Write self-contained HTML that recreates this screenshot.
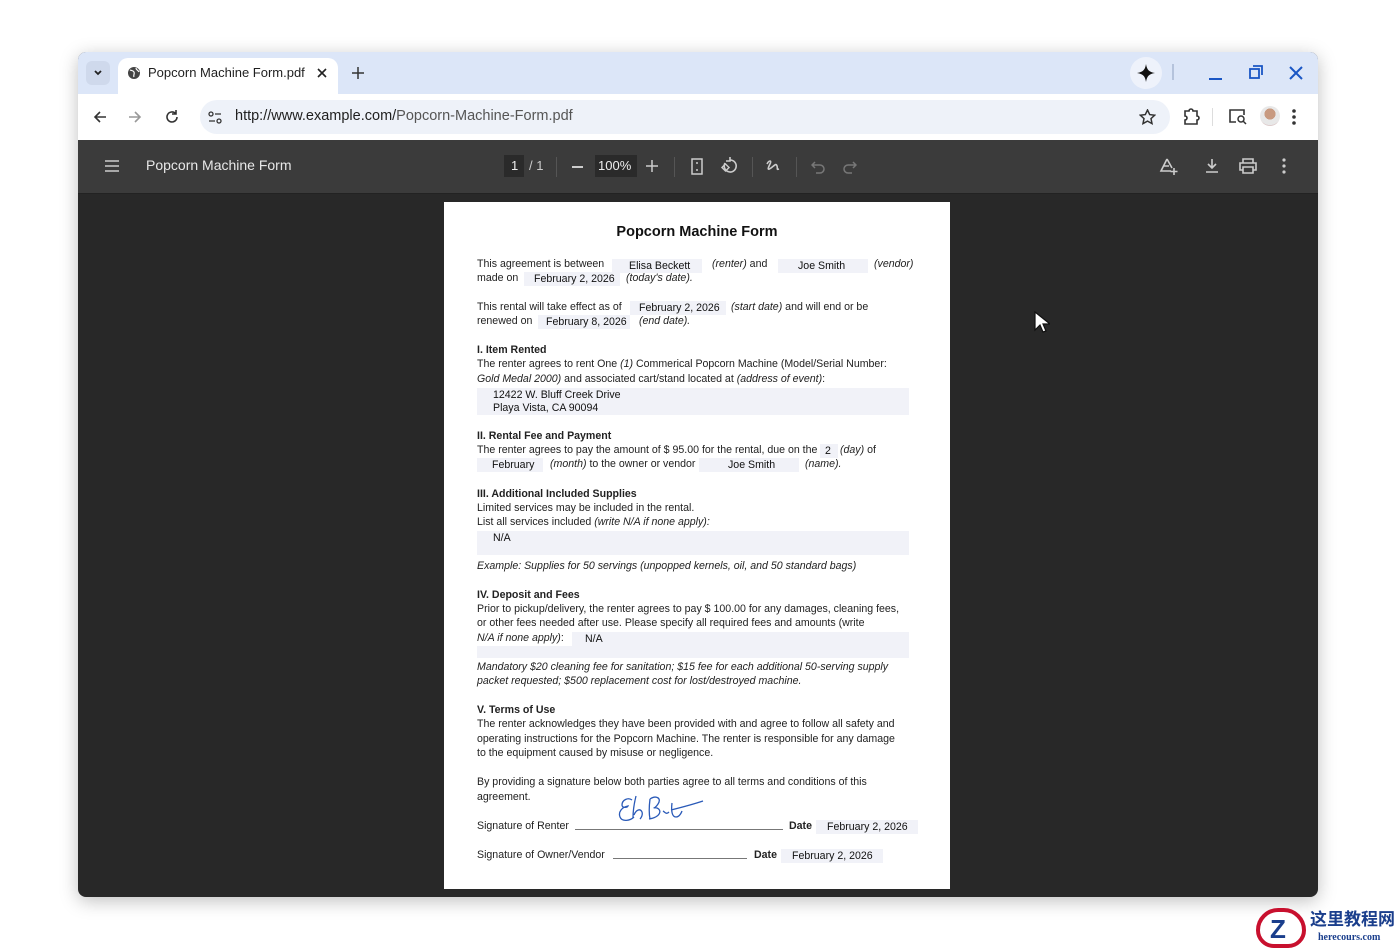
<!DOCTYPE html>
<html><head><meta charset="utf-8"><style>
*{margin:0;padding:0;box-sizing:border-box}
body{width:1400px;height:950px;background:#fff;position:relative;overflow:hidden;font-family:"Liberation Sans",Arial,sans-serif}
.win{position:absolute;left:78px;top:52px;width:1240px;height:845px;box-shadow:0 4px 18px rgba(0,0,0,.25);border-radius:8px;overflow:hidden;background:#282828}
.tabs{position:absolute;left:0;top:0;width:1240px;height:42px;background:#dce6f8}
.tab{position:absolute;left:40px;top:6px;width:220px;height:36px;background:#fff;border-radius:10px 10px 0 0}
.addr{position:absolute;left:0;top:42px;width:1240px;height:46px;background:#fff}
.url{position:absolute;left:122px;top:6px;width:970px;height:34px;border-radius:17px;background:#eef2f9}
.tb{position:absolute;left:0;top:88px;width:1240px;height:54px;background:#3b3b3b;border-bottom:1px solid #222}
.page{position:absolute;left:444px;top:202px;width:506px;height:687px;background:#fff}
.t{position:absolute;font-size:10.6px;line-height:13px;white-space:nowrap;color:#222}
.b{font-weight:bold}
i{font-style:italic}
.f{position:absolute;background:#f1f2f8;font-size:10.6px;line-height:14px;height:14px;color:#111;white-space:nowrap}
.ic{position:absolute}
</style></head><body>
<div class="win">
 <div class="tabs">
  <div style="position:absolute;left:8px;top:9px;width:24px;height:24px;border-radius:6px;background:#cfd9ec"></div>
  <svg class="ic" style="left:14px;top:15px" width="12" height="12"><path d="M3 4l3 3 3-3" stroke="#222" stroke-width="1.8" fill="none"/></svg>
  <div class="tab">
   <svg class="ic" style="left:9px;top:8px" width="14" height="14"><circle cx="7" cy="7" r="6" fill="#444"/><path d="M3 4c2 1 3 0 4 2s-1 3 0 5M9 2c0 2 2 2 3 4" stroke="#fff" stroke-width="1.2" fill="none"/></svg>
   <div class="t" style="left:30px;top:7px;font-size:13px;line-height:16px;color:#1f1f1f">Popcorn Machine Form.pdf</div>
   <svg class="ic" style="left:198px;top:9px" width="12" height="12"><path d="M2 2l8 8M10 2l-8 8" stroke="#222" stroke-width="1.6"/></svg>
  </div>
  <svg class="ic" style="left:273px;top:14px" width="14" height="14"><path d="M7 1v12M1 7h12" stroke="#333" stroke-width="1.5"/></svg>
  <div style="position:absolute;left:1052px;top:5px;width:32px;height:32px;border-radius:16px;background:#eef2fb"></div>
  <svg class="ic" style="left:1059px;top:12px" width="18" height="18"><path d="M9 0C10 6 12 8 18 9 12 10 10 12 9 18 8 12 6 10 0 9 6 8 8 6 9 0z" fill="#111"/></svg>
  <div style="position:absolute;left:1094px;top:12px;width:2px;height:16px;background:#b5c3dc"></div>
  <div style="position:absolute;left:1131px;top:26px;width:13px;height:2px;background:#1a56c4"></div>
  <svg class="ic" style="left:1171px;top:13px" width="14" height="14"><rect x="1" y="4" width="9" height="9" fill="none" stroke="#1a56c4" stroke-width="1.8"/><path d="M4 1h9v9" fill="none" stroke="#1a56c4" stroke-width="1.8"/></svg>
  <svg class="ic" style="left:1211px;top:14px" width="14" height="14"><path d="M1 1l12 12M13 1L1 13" stroke="#1a56c4" stroke-width="2"/></svg>
 </div>
 <div class="addr">
  <svg class="ic" style="left:14px;top:15px" width="16" height="16"><path d="M14 8H3M8 3L3 8l5 5" stroke="#333" stroke-width="1.6" fill="none"/></svg>
  <svg class="ic" style="left:49px;top:15px" width="16" height="16"><path d="M2 8h11M8 3l5 5-5 5" stroke="#999" stroke-width="1.6" fill="none"/></svg>
  <svg class="ic" style="left:86px;top:15px" width="16" height="16"><path d="M13 8a5 5 0 1 1-1.5-3.6M12 1v4H8" stroke="#333" stroke-width="1.6" fill="none"/></svg>
  <div class="url">
   <svg class="ic" style="left:7px;top:10px" width="16" height="16"><circle cx="4" cy="4" r="2" fill="none" stroke="#333" stroke-width="1.3"/><path d="M8 4h6M2 11h6" stroke="#333" stroke-width="1.3"/><circle cx="12" cy="11" r="2" fill="none" stroke="#333" stroke-width="1.3"/></svg>
   <div class="t" style="left:35px;top:7px;font-size:14.5px;line-height:18px;color:#1f1f1f">http://www.example.com/<span style="color:#555">Popcorn-Machine-Form.pdf</span></div>
   <svg class="ic" style="left:939px;top:9px" width="17" height="17"><path d="M8.5 1l2.2 4.6 5 .6-3.7 3.4 1 5-4.5-2.5-4.5 2.5 1-5L1.3 6.2l5-.6z" fill="none" stroke="#333" stroke-width="1.5"/></svg>
  </div>
  <svg class="ic" style="left:1104px;top:14px" width="18" height="18"><path d="M3 3h4a2 2 0 0 1 4 0h4v5a2 2 0 0 1 0 4v4H3v-4a2 2 0 0 0 0-4z" fill="none" stroke="#333" stroke-width="1.6"/></svg>
  <div style="position:absolute;left:1134px;top:14px;width:1px;height:18px;background:#ddd"></div>
  <svg class="ic" style="left:1150px;top:14px" width="19" height="17"><path d="M8 14H2V2h14v5" fill="none" stroke="#333" stroke-width="1.6"/><circle cx="13" cy="11" r="3" fill="none" stroke="#333" stroke-width="1.5"/><path d="M15 13l3 3" stroke="#333" stroke-width="1.5"/></svg>
  <div style="position:absolute;left:1182px;top:12px;width:20px;height:20px;border-radius:10px;background:radial-gradient(circle at 50% 40%,#c89a80 0 35%,#e8e8e8 36% 70%,#dcc 71%)"></div>
  <svg class="ic" style="left:1213px;top:14px" width="6" height="18"><circle cx="3" cy="3" r="1.8" fill="#333"/><circle cx="3" cy="9" r="1.8" fill="#333"/><circle cx="3" cy="15" r="1.8" fill="#333"/></svg>
 </div>
 <div class="tb">
  <svg class="ic" style="left:26px;top:19px" width="16" height="14"><path d="M1 2h14M1 7h14M1 12h14" stroke="#ccc" stroke-width="1.5"/></svg>
  <div class="t" style="left:68px;top:16px;font-size:14px;line-height:18px;color:#e8e8e8">Popcorn Machine Form</div>
  <div style="position:absolute;left:426px;top:15px;width:20px;height:22px;background:#2a2a2a"></div>
  <div class="t" style="left:433px;top:18px;font-size:13px;line-height:16px;color:#eee">1</div>
  <div class="t" style="left:451px;top:18px;font-size:13px;line-height:16px;color:#ccc">/ 1</div>
  <div style="position:absolute;left:478px;top:17px;width:1px;height:20px;background:#555"></div>
  <div style="position:absolute;left:494px;top:26px;width:11px;height:1.5px;background:#ccc"></div>
  <div style="position:absolute;left:517px;top:15px;width:42px;height:22px;background:#2a2a2a"></div>
  <div class="t" style="left:520px;top:18px;font-size:13px;line-height:16px;color:#eee">100%</div>
  <svg class="ic" style="left:568px;top:20px" width="12" height="12"><path d="M6 0v12M0 6h12" stroke="#ccc" stroke-width="1.5"/></svg>
  <div style="position:absolute;left:596px;top:17px;width:1px;height:20px;background:#555"></div>
  <svg class="ic" style="left:613px;top:18px" width="12" height="17"><rect x="1" y="1" width="10" height="15" fill="none" stroke="#ccc" stroke-width="1.5"/><path d="M6 4v2M6 11v2" stroke="#ccc" stroke-width="1.5"/></svg>
  <svg class="ic" style="left:642px;top:17px" width="18" height="18"><path d="M10 3a6 6 0 1 1-5 3M10 0v4H6" fill="none" stroke="#ccc" stroke-width="1.6"/><rect x="3" y="8" width="5" height="5" transform="rotate(45 5.5 10.5)" fill="none" stroke="#ccc" stroke-width="1.4"/></svg>
  <div style="position:absolute;left:674px;top:17px;width:1px;height:20px;background:#555"></div>
  <svg class="ic" style="left:687px;top:18px" width="16" height="16"><path d="M2 6c2-4 5-4 3 0s-3 7 1 4 5-5 6-2-1 4 2 3" fill="none" stroke="#ccc" stroke-width="1.6"/></svg>
  <div style="position:absolute;left:718px;top:17px;width:1px;height:20px;background:#555"></div>
  <svg class="ic" style="left:733px;top:20px" width="14" height="14"><path d="M4 2L1 5l3 3M1 5h8a4 4 0 0 1 0 8H5" fill="none" stroke="#777" stroke-width="1.5"/></svg>
  <svg class="ic" style="left:765px;top:20px" width="14" height="14"><path d="M10 2l3 3-3 3M13 5H5a4 4 0 0 0 0 8h4" fill="none" stroke="#777" stroke-width="1.5"/></svg>
  <svg class="ic" style="left:1081px;top:17px" width="20" height="19"><path d="M8 2L2 14h10M8 2l5 9M5 9h5" fill="none" stroke="#ccc" stroke-width="1.6"/><path d="M15 11v7M11.5 14.5h7" stroke="#ccc" stroke-width="1.6"/></svg>
  <svg class="ic" style="left:1127px;top:18px" width="14" height="16"><path d="M7 1v9M3 6l4 4 4-4M1 14h12" fill="none" stroke="#ccc" stroke-width="1.6"/></svg>
  <svg class="ic" style="left:1161px;top:18px" width="18" height="16"><path d="M4 5V1h10v4M4 12H1V5h16v7h-3M4 9h10v6H4z" fill="none" stroke="#ccc" stroke-width="1.6"/></svg>
  <svg class="ic" style="left:1203px;top:18px" width="6" height="16"><circle cx="3" cy="2" r="1.6" fill="#ccc"/><circle cx="3" cy="8" r="1.6" fill="#ccc"/><circle cx="3" cy="14" r="1.6" fill="#ccc"/></svg>
 </div>
</div>
<svg class="ic" style="left:1034px;top:311px" width="16" height="24"><path d="M1 1v18l5-5 3 7 3-1-3-7h7z" fill="#fff" stroke="#111" stroke-width="1.2"/></svg>

<div class="page">
 <div class="t b" style="left:0;width:506px;text-align:center;top:21px;font-size:14.5px;line-height:18px;color:#111">Popcorn Machine Form</div>
 <div class="t" style="left:33px;top:56px">This agreement is between</div>
 <div class="f" style="left:168px;top:57px;width:90px;padding-left:17px">Elisa Beckett</div>
 <div class="t" style="left:268px;top:56px"><i>(renter)</i> and</div>
 <div class="f" style="left:334px;top:57px;width:90px;padding-left:20px">Joe Smith</div>
 <div class="t" style="left:430px;top:56px"><i>(vendor)</i></div>
 <div class="t" style="left:33px;top:70px">made on</div>
 <div class="f" style="left:80px;top:70px;width:96px;padding-left:10px">February 2, 2026</div>
 <div class="t" style="left:182px;top:70px"><i>(today's date).</i></div>

 <div class="t" style="left:33px;top:99px">This rental will take effect as of</div>
 <div class="f" style="left:186px;top:99px;width:96px;padding-left:9px">February 2, 2026</div>
 <div class="t" style="left:287px;top:99px"><i>(start date)</i> and will end or be</div>
 <div class="t" style="left:33px;top:113px">renewed on</div>
 <div class="f" style="left:94px;top:113px;width:92px;padding-left:8px">February 8, 2026</div>
 <div class="t" style="left:195px;top:113px"><i>(end date).</i></div>

 <div class="t b" style="left:33px;top:142px">I. Item Rented</div>
 <div class="t" style="left:33px;top:156px">The renter agrees to rent One <i>(1)</i> Commerical Popcorn Machine (Model/Serial Number:</div>
 <div class="t" style="left:33px;top:171px"><i>Gold Medal 2000)</i> and associated cart/stand located at <i>(address of event)</i>:</div>
 <div class="f" style="left:33px;top:186px;width:432px;height:27px;line-height:13px;padding:1px 0 0 16px">12422 W. Bluff Creek Drive<br>Playa Vista, CA 90094</div>

 <div class="t b" style="left:33px;top:228px">II. Rental Fee and Payment</div>
 <div class="t" style="left:33px;top:242px">The renter agrees to pay the amount of $ 95.00 for the rental, due on the</div>
 <div class="f" style="left:376px;top:242px;width:18px;padding-left:5px">2</div>
 <div class="t" style="left:396px;top:242px"><i>(day)</i> of</div>
 <div class="f" style="left:33px;top:256px;width:66px;padding-left:15px">February</div>
 <div class="t" style="left:106px;top:256px"><i>(month)</i> to the owner or vendor</div>
 <div class="f" style="left:255px;top:256px;width:100px;padding-left:29px">Joe Smith</div>
 <div class="t" style="left:361px;top:256px"><i>(name).</i></div>

 <div class="t b" style="left:33px;top:286px">III. Additional Included Supplies</div>
 <div class="t" style="left:33px;top:300px">Limited services may be included in the rental.</div>
 <div class="t" style="left:33px;top:314px">List all services included <i>(write N/A if none apply):</i></div>
 <div class="f" style="left:33px;top:329px;width:432px;height:24px;padding-left:16px">N/A</div>
 <div class="t" style="left:33px;top:358px"><i>Example: Supplies for 50 servings (unpopped kernels, oil, and 50 standard bags)</i></div>

 <div class="t b" style="left:33px;top:387px">IV. Deposit and Fees</div>
 <div class="t" style="left:33px;top:401px">Prior to pickup/delivery, the renter agrees to pay $ 100.00 for any damages, cleaning fees,</div>
 <div class="t" style="left:33px;top:415px">or other fees needed after use. Please specify all required fees and amounts (write</div>
 <div class="t" style="left:33px;top:430px"><i>N/A if none apply)</i>:</div>
 <div class="f" style="left:128px;top:430px;width:337px;padding-left:13px">N/A</div>
 <div class="f" style="left:33px;top:444px;width:432px;height:12px"></div>
 <div class="t" style="left:33px;top:459px"><i>Mandatory $20 cleaning fee for sanitation; $15 fee for each additional 50-serving supply</i></div>
 <div class="t" style="left:33px;top:473px"><i>packet requested; $500 replacement cost for lost/destroyed machine.</i></div>

 <div class="t b" style="left:33px;top:502px">V. Terms of Use</div>
 <div class="t" style="left:33px;top:516px">The renter acknowledges they have been provided with and agree to follow all safety and</div>
 <div class="t" style="left:33px;top:531px">operating instructions for the Popcorn Machine. The renter is responsible for any damage</div>
 <div class="t" style="left:33px;top:545px">to the equipment caused by misuse or negligence.</div>

 <div class="t" style="left:33px;top:574px">By providing a signature below both parties agree to all terms and conditions of this</div>
 <div class="t" style="left:33px;top:589px">agreement.</div>
 <div class="t" style="left:33px;top:618px">Signature of Renter</div>
 <div style="position:absolute;left:131px;top:627px;width:208px;height:1px;background:#777"></div>
 <svg class="ic" style="left:172px;top:591px" width="100" height="40"><path d="M16 7c-4-3-10 0-10 5 0 3 5 3 6 1-6 1-10 6-8 11s10 4 14 0M20 3c-2 8-3 16-3 22M18 22c2-5 6-7 8-3 1 3-1 6-2 7M34 6c-1 8-1 15 0 20M34 6c6-4 12-1 8 5s-6 3-1 4c5 2 4 9-8 11M47 18c2 1 3 4 6 1M56 10c-1 8 0 14 4 14s6-6 6-6M55 17c8-2 20-5 32-9" fill="none" stroke="#2a5ab8" stroke-width="1.3"/></svg>
 <div class="t b" style="left:345px;top:618px">Date</div>
 <div class="f" style="left:372px;top:618px;width:102px;padding-left:11px">February 2, 2026</div>
 <div class="t" style="left:33px;top:647px">Signature of Owner/Vendor</div>
 <div style="position:absolute;left:169px;top:656px;width:134px;height:1px;background:#777"></div>
 <div class="t b" style="left:310px;top:647px">Date</div>
 <div class="f" style="left:337px;top:647px;width:102px;padding-left:11px">February 2, 2026</div>
</div>
<div style="position:absolute;left:1256px;top:908px;width:50px;height:40px;border-radius:25px 25px 20px 20px;border:4px solid #c8102e;background:#fff"></div>
<div style="position:absolute;left:1270px;top:914px;font:bold 26px 'Liberation Sans',sans-serif;color:#1a3e8c">Z</div>
<div class="t b" style="left:1310px;top:910px;font-size:17px;line-height:20px;color:#1a3e8c;font-family:'Liberation Sans','Noto Sans CJK SC',sans-serif">这里教程网</div>
<div class="t b" style="left:1318px;top:932px;font-size:10px;line-height:12px;color:#1a3e8c;font-family:'Liberation Serif',serif">herecours.com</div>
</body></html>
